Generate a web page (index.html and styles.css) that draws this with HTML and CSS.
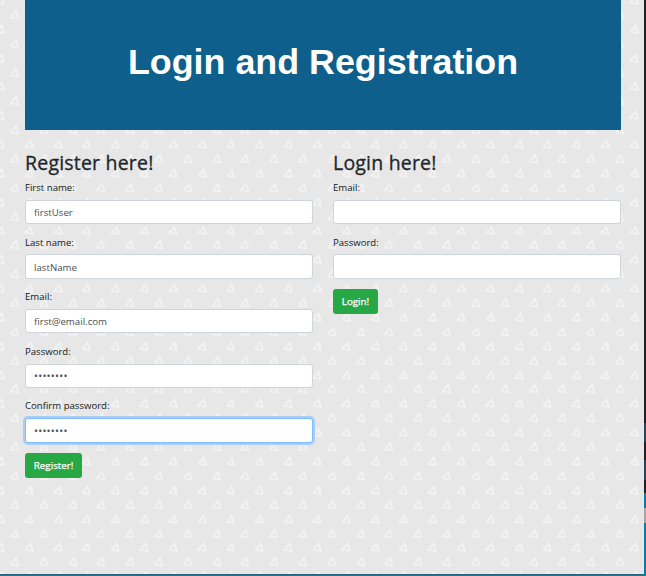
FILE: index.html
```html
<!DOCTYPE html>
<html lang="en">
<head>
<meta charset="utf-8">
<title>Login and Registration</title>
<link rel="stylesheet" href="styles.css">
</head>
<body>
<div class="window">
  <header class="banner"><h1>Login and Registration</h1></header>
  <main class="columns">
    <form class="panel">
      <h2>Register here!</h2>
      <div class="field"><label for="first">First name:</label><input id="first" type="text" value="firstUser"></div>
      <div class="field"><label for="last">Last name:</label><input id="last" type="text" value="lastName"></div>
      <div class="field"><label for="email">Email:</label><input id="email" type="text" value="first@email.com"></div>
      <div class="field"><label for="pass">Password:</label><input id="pass" type="text" class="secret" value="••••••••"></div>
      <div class="field"><label for="confirm">Confirm password:</label><input id="confirm" type="text" class="secret focused" value="••••••••"></div>
      <button type="button">Register!</button>
    </form>
    <form class="panel">
      <h2>Login here!</h2>
      <div class="field"><label for="login-email">Email:</label><input id="login-email" type="text"></div>
      <div class="field"><label for="login-pass">Password:</label><input id="login-pass" type="text"></div>
      <button type="button">Login!</button>
    </form>
  </main>
</div>
<div class="edge"></div>
</body>
</html>
```
FILE: styles.css
```css
* { box-sizing: border-box; }
body {
  margin: 0;
  width: 646px;
  height: 576px;
  overflow: hidden;
  display: grid;
  grid-template-columns: 644px 2px;
  background: #0b7ba7;
  font-family: "Open Sans", "Noto Sans", sans-serif;
  color: #212529;
}
.window {
  height: 575px;
  padding: 0 23px 0 25px;
  border-bottom: 1px solid #23637b;
  background-color: #e7e7e7;
  background-image: url("data:image/svg+xml,%3Csvg xmlns='http://www.w3.org/2000/svg' width='28.82' height='28.82' viewBox='0 0 28.82 28.82'%3E%3Cg fill='none' stroke='%23f2f2f2' stroke-width='1.8' stroke-linejoin='round'%3E%3Cpath d='M16 10.8L10.8 17.2L18.3 18.5Z'/%3E%3Cpath d='M1.6 25.2L-3.6 31.6L3.9 32.9Z'/%3E%3Cpath d='M30.4 25.2L25.2 31.6L32.7 32.9Z'/%3E%3Cpath d='M1.6 -3.6L-3.6 2.8L3.9 4.1Z'/%3E%3Cpath d='M30.4 -3.6L25.2 2.8L32.7 4.1Z'/%3E%3C/g%3E%3C/svg%3E");
  background-size: 28.82px 28.82px;
}
.edge {
  height: 575px;
  background: linear-gradient(#202124 0 423px, #25465a 423px 442px, #202124 442px 460px, #25465a 460px 480px, #202124 480px 493px, #0b7ba7 493px 508px, #a5a5a5 508px 523px, #0b7ba7 523px);
}
.banner {
  height: 130px;
  padding-bottom: 6px;
  display: flex;
  align-items: center;
  justify-content: center;
  background: #0e5f8b;
}
h1 {
  margin: 0;
  font: bold 35.85px/40px "Liberation Sans", Arial, sans-serif;
  color: #fff;
}
.columns {
  display: grid;
  grid-template-columns: 288px 288px;
  column-gap: 20px;
  padding-top: 20px;
}
h2 {
  margin: 0 0 5px;
  font-size: 19.5px;
  font-weight: 500;
  letter-spacing: 0.2px;
  line-height: 25px;
  white-space: nowrap;
  -webkit-text-stroke: 0.3px #212529;
}
.field {
  height: 54.55px;
  display: flex;
  flex-direction: column;
}
label {
  height: 19.9px;
  font-size: 9.6px;
  line-height: 15px;
  color: #16191c;
}
input {
  width: 100%;
  height: 24.5px;
  padding: 1px 8px 0;
  border: 1px solid #ced4da;
  border-radius: 3px;
  background: #fff;
  color: #495057;
  font: 9.7px/15px "Open Sans", "Noto Sans", sans-serif;
  outline: none;
}
.secret {
  font-size: 10.5px;
  letter-spacing: 0.25px;
}
.focused {
  border-color: #80bdff;
  box-shadow: 0 0 0 2px #a9cdf3;
}
button {
  display: block;
  height: 25px;
  margin: 0.2px 0 0;
  padding: 0 8.8px;
  border: 0;
  border-radius: 3px;
  background: #28a745;
  color: #fff;
  font: 500 9.8px/25px "Open Sans", "Noto Sans", sans-serif;
  -webkit-text-stroke: 0.25px #fff;
}
```
